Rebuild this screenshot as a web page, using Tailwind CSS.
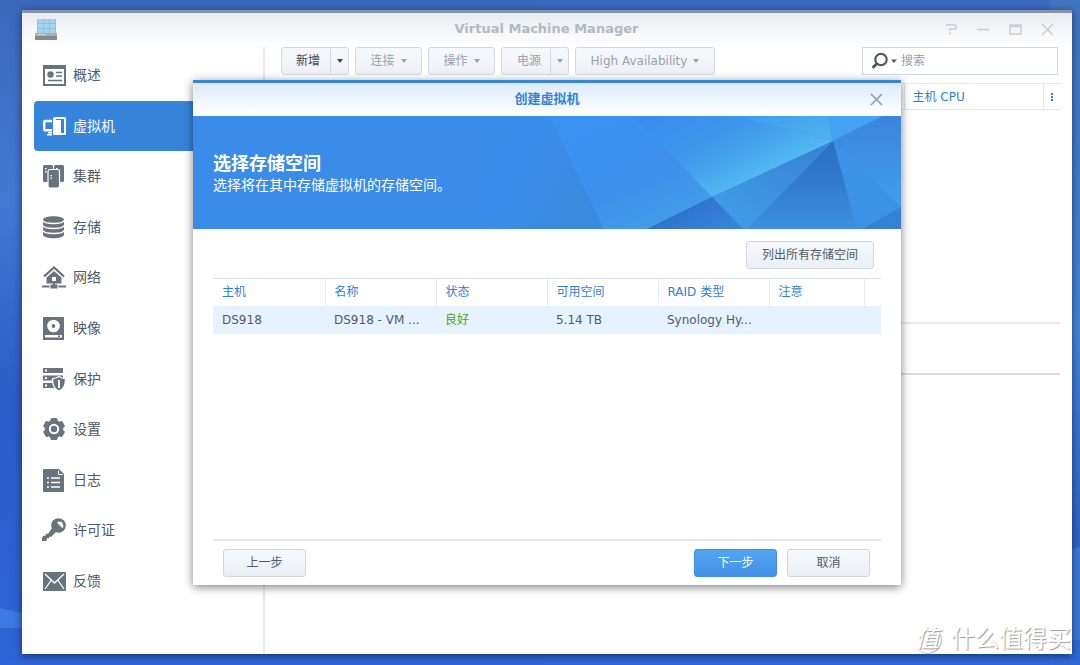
<!DOCTYPE html>
<html lang="zh-CN">
<head>
<meta charset="utf-8">
<meta name="viewport" content="width=device-width, initial-scale=1">
<title>Virtual Machine Manager</title>
<script src="https://cdn.jsdelivr.net/npm/@tailwindcss/browser@4"></script>
</head>
<body class="relative flex h-screen overflow-hidden bg-linear-to-b from-[#3d69bf] via-[#3f79d4] to-[#2f66d8] pt-2.5 pr-2 pb-[11px] pl-[22px] font-['DejaVu_Sans','Noto_Sans_CJK_SC',sans-serif] text-xs text-[#505a64]">

<!-- wallpaper -->
<svg class="absolute inset-0 size-full" viewBox="0 0 1080 665" preserveAspectRatio="none" aria-hidden="true">
  <defs>
    <linearGradient id="wl" x1="0" y1="0" x2="0" y2="1"><stop offset="0" stop-color="#3c68bb"/><stop offset=".3" stop-color="#4379d3"/><stop offset=".6" stop-color="#2c5cc6"/><stop offset="1" stop-color="#2f64d6"/></linearGradient>
    <linearGradient id="wr" x1="0" y1="0" x2="0" y2="1"><stop offset="0" stop-color="#4075be"/><stop offset=".5" stop-color="#4384d4"/><stop offset=".8" stop-color="#2e63c8"/><stop offset="1" stop-color="#3069d6"/></linearGradient>
  </defs>
  <path fill="url(#wl)" d="M0 0H540V665H0z"/>
  <path fill="url(#wr)" d="M1050 0H1080V665H1050z"/>
  <path fill="#3a7ae2" d="M0 608L40 617V628H0z"/>
  <path fill="#3a78db" d="M1050 558L1080 547V640H1050z"/>
</svg>

<div class="relative flex min-w-0 flex-1 flex-col border-t-3 border-[#8693a8] bg-white shadow-[0_2px_8px_rgba(0,15,60,0.6)]">

  <!-- title bar -->
  <header class="flex h-[34px] shrink-0 items-center bg-linear-to-b from-[#e8ecf1] to-white pr-[17px] pb-0.5 pl-3">
    <svg class="size-6" viewBox="0 0 24 24" aria-hidden="true">
      <path fill="#8cc3e3" d="M3 2h19v15H3z"/>
      <path fill="#a5d3ec" d="M4 2h5v4H4zM10 2h5v4h-5zM16 2h5v4h-5zM4 7h5v4H4zM10 7h5v4h-5zM16 7h5v4h-5zM4 12h5v4H4zM10 12h5v4h-5zM16 12h5v4h-5z"/>
      <path fill="#a9adb0" d="M1 16h22v3H1z"/><path fill="#85898c" d="M1 19h22v4H1z"/>
      <path fill="#d4d7d9" d="M3 17h9v1H3z"/><path fill="#c4b98a" d="M17 17h4v1h-4z"/>
    </svg>
    <h1 class="flex-1 pl-[92px] text-center text-[13px] font-bold text-[#b3b9c1]">Virtual Machine Manager</h1>
    <div class="flex gap-4 text-[#c9cdd2]">
      <button aria-label="帮助" class="size-4"><svg viewBox="0 0 16 16" fill="none" stroke="currentColor" stroke-width="1.500"><path d="M3 4h9q1 0 1 1v2q0 1-1 1H7v2M6 12.500h2"/></svg></button>
      <button aria-label="最小化" class="size-4"><svg viewBox="0 0 16 16" fill="none" stroke="currentColor" stroke-width="1.500"><path d="M2 8.500h12"/></svg></button>
      <button aria-label="最大化" class="size-4"><svg viewBox="0 0 16 16" fill="none" stroke="currentColor" stroke-width="1.500"><path d="M3 4h11v9H3zM3 5.500h11"/></svg></button>
      <button aria-label="关闭" class="size-4"><svg viewBox="0 0 16 16" fill="none" stroke="currentColor" stroke-width="1.500"><path d="M3 3l11 11M14 3L3 14"/></svg></button>
    </div>
  </header>

  <div class="flex min-h-0 flex-1">
    <!-- sidebar -->
    <nav class="w-[243px] shrink-0 border-r-2 border-[#e8e9eb] pt-[3px] pl-3 text-sm">
      <ul class="grid h-[556px] auto-rows-fr">
        <li><a href="#" class="flex h-full items-center gap-[7px] rounded-l pl-2"><svg class="size-6 text-[#69737d]" viewBox="0 0 24 24"><path fill="currentColor" fill-rule="evenodd" d="M1 2h23v21H1zM3 6v15h19V6z"/><circle cx="8.500" cy="11.500" r="3.200" fill="currentColor"/><path stroke="currentColor" stroke-width="1.600" d="M14 9.500h6M14 13h6M6 17.500h14"/></svg>概述</a></li>
        <li><a href="#" aria-current="page" class="flex h-full items-center gap-[7px] rounded-l bg-[#3685db] pl-2 text-white"><svg class="size-6" viewBox="0 0 24 24"><path fill="none" stroke="#fff" stroke-width="2.500" d="M10 7H3.500Q2.200 7 2.200 8.300V15q0 1.300 1.300 1.300H10"/><path fill="#fff" d="M6 18h4v1.500H6zM5 20h5v1.500H5z"/><path fill="#fff" fill-rule="evenodd" d="M12.500 3H22.500Q24 3 24 4.500V19.500Q24 21 22.500 21H12.500Q11 21 11 19.500V4.500Q11 3 12.500 3zM14 5v1h5v13h3V5z"/></svg>虚拟机</a></li>
        <li><a href="#" class="flex h-full items-center gap-[7px] rounded-l pl-2"><svg class="size-6 text-[#69737d]" viewBox="0 0 24 24"><rect x="1" y="1" width="10" height="17" rx="1.500" fill="currentColor"/><rect x="12" y="1" width="10" height="17" rx="1.500" fill="currentColor"/><rect x="6" y="5.500" width="11.500" height="18.500" rx="2" fill="currentColor" stroke="#fff" stroke-width="1.200"/><path fill="#fff" d="M3 4h1.500v1.500H3zM3 7h1.500v1.500H3zM14 4h1.500v1H14zM8.500 11H10v1.200H8.500zM8.500 13.500H10v1.200H8.500z"/></svg>集群</a></li>
        <li><a href="#" class="flex h-full items-center gap-[7px] rounded-l pl-2"><svg class="size-6 text-[#69737d]" viewBox="0 0 24 24"><path fill="currentColor" d="M1 5C1 0 22 0 22 5V19.500C22 24.500 1 24.500 1 19.500z"/><path fill="none" stroke="#fff" stroke-width="1.300" d="M1 5.500C2 9.500 21 9.500 22 5.500M1 10.500C2 14.500 21 14.500 22 10.500M1 15.500C2 19.500 21 19.500 22 15.500"/></svg>存储</a></li>
        <li><a href="#" class="flex h-full items-center gap-[7px] rounded-l pl-2"><svg class="size-6 text-[#69737d]" viewBox="0 0 24 24"><path fill="none" stroke="currentColor" stroke-width="2.300" d="M2 11.500L12 2.500 22 11.500"/><path fill="currentColor" fill-rule="evenodd" d="M12 6l7.500 6.500V18.500h-15v-6zM10 12v4h4v-4z"/><path fill="currentColor" d="M11 18h2v1.500h2.500v4h-7v-4H11zM0 20.500h7.500v2H0zM16.500 20.500H24v2h-7.500z"/></svg>网络</a></li>
        <li><a href="#" class="flex h-full items-center gap-[7px] rounded-l pl-2"><svg class="size-6 text-[#69737d]" viewBox="0 0 24 24"><path fill="currentColor" d="M1 1h21v23H1z"/><circle cx="11.500" cy="10" r="6.300" fill="#fff"/><circle cx="11.500" cy="10" r="1.900" fill="currentColor"/><path fill="#fff" d="M3 19h17v2.500H3z"/><path fill="currentColor" d="M16 19.500h2v1.500h-2z"/></svg>映像</a></li>
        <li><a href="#" class="flex h-full items-center gap-[7px] rounded-l pl-2"><svg class="size-6 text-[#69737d]" viewBox="0 0 24 24"><path fill="currentColor" d="M1 1h20v5H1zM1 8.500h20v5H1zM1 16h12v5H1z"/><path fill="#fff" d="M3 2.500h2v2H3zM3 10h2v2H3zM3 17.500h2v2H3z"/><path fill="currentColor" stroke="#fff" stroke-width="1.200" d="M17 9.500q3 2 6.300 2Q24 21 17 24q-7-3-6.300-12.500 3.300 0 6.300-2z"/><path fill="#fff" d="M16 13h2v8h-2z"/></svg>保护</a></li>
        <li><a href="#" class="flex h-full items-center gap-[7px] rounded-l pl-2"><svg class="size-6 text-[#69737d]" viewBox="0 0 24 24"><g fill="currentColor"><circle cx="12" cy="12" r="9.300"/><rect x="8.500" y="1" width="7" height="22" rx="1.500"/><rect x="8.500" y="1" width="7" height="22" rx="1.500" transform="rotate(60 12 12)"/><rect x="8.500" y="1" width="7" height="22" rx="1.500" transform="rotate(120 12 12)"/></g><circle cx="12" cy="12" r="4.200" fill="none" stroke="#fff" stroke-width="2"/></svg>设置</a></li>
        <li><a href="#" class="flex h-full items-center gap-[7px] rounded-l pl-2"><svg class="size-6 text-[#69737d]" viewBox="0 0 24 24"><path fill="currentColor" d="M2 1H17L22 6V24H2Q1 24 1 23V2Q1 1 2 1z"/><path fill="none" stroke="#fff" d="M16.500 2.500v4H21"/><path stroke="#fff" stroke-width="1.600" d="M5 10h2M9 10h9M5 14.500h2M9 14.500h9M5 19h2M9 19h9"/></svg>日志</a></li>
        <li><a href="#" class="flex h-full items-center gap-[7px] rounded-l pl-2"><svg class="size-6 text-[#69737d]" viewBox="0 0 24 24"><circle cx="16.500" cy="7.500" r="7.300" fill="currentColor"/><path fill="currentColor" d="M10 10l4 4-5 5-1.500-.5-.5 2-2-.3L4.500 23H0v-3.500l2-2 1.500.5.500-2.500 2 .5z"/><path fill="#fff" d="M15 4.500Q18 2.500 20.500 5q1.500 2.500 0 5.200z"/></svg>许可证</a></li>
        <li><a href="#" class="flex h-full items-center gap-[7px] rounded-l pl-2"><svg class="size-6 text-[#69737d]" viewBox="0 0 24 24"><rect x="1" y="3" width="23" height="19" rx="1" fill="currentColor"/><path fill="none" stroke="#fff" stroke-width="1.300" d="M3 5l9.500 9L22 5M3 20l6-8.500M22 20l-6-8.500"/></svg>反馈</a></li>
      </ul>
    </nav>

    <!-- virtual machine list -->
    <main class="min-w-0 flex-1 pr-3">
      <div class="flex gap-1.5 pr-0.5 pl-4">
        <div class="flex h-7 overflow-hidden rounded-[3px] border border-[#d3d9e2] bg-linear-to-b from-[#f6f9fc] to-[#eef0f5] text-[#3e4852]">
          <button class="w-12 pl-1">新增</button>
          <button aria-label="新增选项" class="grid w-[18px] place-items-center border-l border-[#d3d9e2]"><svg class="h-1 w-1.5" viewBox="0 0 6 4"><path fill="currentColor" d="M0 0h6L3 4z"/></svg></button>
        </div>
        <button class="flex h-7 w-[67px] items-center justify-center gap-1.5 rounded-[3px] border border-[#d3d9e2] bg-linear-to-b from-[#f6f9fc] to-[#eef0f5] text-[#9ba1a9]">连接<svg class="h-1 w-1.5" viewBox="0 0 6 4"><path fill="currentColor" d="M0 0h6L3 4z"/></svg></button>
        <button class="flex h-7 w-[67px] items-center justify-center gap-1.5 rounded-[3px] border border-[#d3d9e2] bg-linear-to-b from-[#f6f9fc] to-[#eef0f5] text-[#9ba1a9]">操作<svg class="h-1 w-1.5" viewBox="0 0 6 4"><path fill="currentColor" d="M0 0h6L3 4z"/></svg></button>
        <div class="flex h-7 overflow-hidden rounded-[3px] border border-[#d3d9e2] bg-linear-to-b from-[#f6f9fc] to-[#eef0f5] text-[#9ba1a9]">
          <button class="w-12 pl-1.5">电源</button>
          <button aria-label="电源选项" class="grid w-[18px] place-items-center border-l border-[#d3d9e2]"><svg class="h-1 w-1.5" viewBox="0 0 6 4"><path fill="currentColor" d="M0 0h6L3 4z"/></svg></button>
        </div>
        <button class="flex h-7 w-[140px] items-center justify-center gap-1.5 rounded-[3px] border border-[#d3d9e2] bg-linear-to-b from-[#f6f9fc] to-[#eef0f5] text-[#9ba1a9]">High Availability<svg class="h-1 w-1.5" viewBox="0 0 6 4"><path fill="currentColor" d="M0 0h6L3 4z"/></svg></button>
        <label class="ml-auto flex h-7 w-[196px] items-center border border-[#d3d9e2] bg-white pl-2">
          <svg class="h-[18px] w-[26px] shrink-0 text-[#505a64]" viewBox="0 0 26 18" role="img" aria-label="搜索"><circle cx="10" cy="7.500" r="5.700" fill="none" stroke="currentColor" stroke-width="2.200"/><path stroke="currentColor" stroke-width="3" stroke-linecap="round" d="M5.500 12L2.500 15"/><path fill="currentColor" d="M20 7.500h6L23 11z"/></svg>
          <input type="text" placeholder="搜索" class="ml-1 w-full min-w-0 outline-none placeholder:text-[#98a0a8]">
        </label>
      </div>
      <table class="mt-2 w-full table-fixed border-y border-[#e3e8f0] text-left text-[#2f7fd8]">
        <thead><tr class="h-[26px]"><td class="border-r border-[#e3e8f0]"></td><th class="w-[139px] border-r border-[#e3e8f0] pl-2 font-normal">主机 CPU</th><th class="w-[17px]"><button aria-label="选择列" class="flex w-full justify-center"><svg class="h-2 w-0.5" viewBox="0 0 2 8"><path fill="currentColor" d="M0 0h2v2H0zM0 3h2v2H0zM0 6h2v2H0z"/></svg></button></th></tr></thead>
      </table>
      <div class="h-[214px] border-b-2 border-[#e9eaeb]"></div>
      <div class="h-[51px] border-b-2 border-[#dbdcdd]"></div>
    </main>
  </div>

  <!-- dialog -->
  <div class="absolute inset-0 grid place-items-center pb-0.5">
    <section role="dialog" aria-labelledby="dialog-title" class="flex h-[505px] w-[708px] flex-col border-t-3 border-[#3685db] bg-white shadow-[0_2px_9px_rgba(0,0,0,0.5)]">
      <header class="flex h-[33px] shrink-0 items-center bg-linear-to-b from-[#dcebf8] to-white pr-4 pb-0.5 pl-8">
        <h2 id="dialog-title" class="flex-1 text-center text-[13px] font-bold text-[#2f82e0]">创建虚拟机</h2>
        <button aria-label="关闭" class="size-4 text-[#979ea6]"><svg viewBox="0 0 16 16" fill="none" stroke="currentColor" stroke-width="1.600"><path d="M2 3l11 11M13 3L2 14"/></svg></button>
      </header>

      <div class="relative h-[113px] shrink-0 bg-[#3a8ce8] px-5 pt-9 text-white">
        <svg class="absolute inset-0 size-full" viewBox="0 0 708 113" preserveAspectRatio="none" aria-hidden="true">
          <defs>
            <linearGradient id="g1" gradientUnits="userSpaceOnUse" x1="290" y1="0" x2="400" y2="60"><stop offset="0" stop-color="#3a8ce8"/><stop offset=".4" stop-color="#3a8eeb"/><stop offset="1" stop-color="#3a8adf"/></linearGradient>
            <linearGradient id="g2" gradientUnits="userSpaceOnUse" x1="400" y1="0" x2="450" y2="120"><stop offset="0" stop-color="#3a92f3"/><stop offset=".6" stop-color="#3e90eb"/><stop offset="1" stop-color="#429ce8"/></linearGradient>
            <linearGradient id="g3" gradientUnits="userSpaceOnUse" x1="520" y1="-25" x2="563" y2="62"><stop offset="0" stop-color="#3a8def"/><stop offset=".5" stop-color="#3f98ea"/><stop offset="1" stop-color="#51b9f1"/></linearGradient>
            <linearGradient id="g4" x1="0" y1="0" x2="1" y2=".5"><stop offset="0" stop-color="#3e9cf2"/><stop offset="1" stop-color="#4dafec"/></linearGradient>
            <linearGradient id="g5" x1="0" y1="0" x2="0" y2="1"><stop offset="0" stop-color="#3986db"/><stop offset="1" stop-color="#419dec"/></linearGradient>
            <linearGradient id="g6" x1="0" y1="0" x2="0" y2="1"><stop offset="0" stop-color="#2a6fc4"/><stop offset=".4" stop-color="#2f78cd"/><stop offset="1" stop-color="#3e90e0"/></linearGradient>
            <linearGradient id="g7" x1="1" y1="0" x2="0" y2="1"><stop offset="0" stop-color="#3681d5"/><stop offset="1" stop-color="#439ee8"/></linearGradient>
            <linearGradient id="g8" x1="0" y1="0" x2="1" y2=".6"><stop offset="0" stop-color="#2864c4"/><stop offset="1" stop-color="#3784dc"/></linearGradient>
          </defs>
          <path fill="url(#g1)" d="M290 0H356L411 113H290z"/>
          <path fill="url(#g2)" d="M356 0H440L519 81 454 113H411z"/>
          <path fill="url(#g3)" d="M440 0H543L640 25 519 81z"/>
          <path fill="url(#g4)" d="M543 0H635L640 25z"/>
          <path fill="#45a2f5" d="M635 0H690L640 25z"/>
          <path fill="url(#g5)" d="M690 0H708V91L640 25z"/>
          <path fill="#3c93e6" d="M640 25L708 91 670 113H664z"/>
          <path fill="#3581d6" d="M708 91V113H670z"/>
          <path fill="url(#g6)" d="M640 25L664 113H554z"/>
          <path fill="url(#g7)" d="M640 25L554 113H550L519 81z"/>
          <path fill="url(#g8)" d="M454 113L519 81 550 113z"/>
        </svg>
        <h3 class="relative text-lg leading-6 font-bold">选择存储空间</h3>
        <p class="relative text-sm leading-[18px]">选择将在其中存储虚拟机的存储空间。</p>
      </div>

      <div class="flex min-h-0 flex-1 flex-col px-5 pt-3">
        <button class="mr-[7px] h-7 w-32 self-end rounded-[3px] border border-[#cfd6e1] bg-linear-to-b from-[#f6f9fc] to-[#ebeef4]">列出所有存储空间</button>
        <table class="mt-[9px] w-full table-fixed border-t border-[#d9e2ee] text-left">
          <thead>
            <tr class="h-[27px] text-[#2f7fd8]">
              <th class="w-28 border-r border-[#e3eaf3] pl-[9px] font-normal">主机</th>
              <th class="w-[111px] border-r border-[#e3eaf3] pl-[9px] font-normal">名称</th>
              <th class="w-[111px] border-r border-[#e3eaf3] pl-[9px] font-normal">状态</th>
              <th class="w-[111px] border-r border-[#e3eaf3] pl-[9px] font-normal">可用空间</th>
              <th class="w-[111px] border-r border-[#e3eaf3] pl-[9px] font-normal">RAID 类型</th>
              <th class="w-[95px] border-r border-[#e3eaf3] pl-[9px] font-normal">注意</th>
              <td></td>
            </tr>
          </thead>
          <tbody>
            <tr class="h-7 bg-[#e6f3fe]">
              <td class="pl-[9px]">DS918</td>
              <td class="pl-[9px] whitespace-nowrap">DS918 - VM ...</td>
              <td class="pl-[9px] text-[#45a025]">良好</td>
              <td class="pl-[9px]">5.14 TB</td>
              <td class="pl-[9px] whitespace-nowrap">Synology Hy...</td>
              <td></td>
              <td></td>
            </tr>
          </tbody>
        </table>
        <footer class="mt-auto flex gap-2.5 border-t-2 border-[#e6e6e6] pt-2 pr-[11px] pb-2 pl-2.5">
          <button class="mr-auto h-7 w-[83px] rounded-[3px] border border-[#cfd6e1] bg-linear-to-b from-[#f6f9fc] to-[#ebeef4]">上一步</button>
          <button class="h-7 w-[83px] rounded-[3px] border border-[#3f8ee0] bg-linear-to-b from-[#52a5f5] to-[#4291e2] text-white">下一步</button>
          <button class="h-7 w-[83px] rounded-[3px] border border-[#cfd6e1] bg-linear-to-b from-[#f6f9fc] to-[#ebeef4]">取消</button>
        </footer>
      </div>
    </section>
  </div>
</div>

<!-- watermark -->
<div class="absolute right-[9px] bottom-2 flex items-center gap-2.5 text-white [text-shadow:1px_1px_1px_#999]">
  <span class="grid size-7 place-items-center rounded-full text-2xl leading-7 italic shadow-[1px_1px_1px_#bbb]">值</span>
  <span class="text-2xl leading-9">什么值得买</span>
</div>
</body>
</html>
